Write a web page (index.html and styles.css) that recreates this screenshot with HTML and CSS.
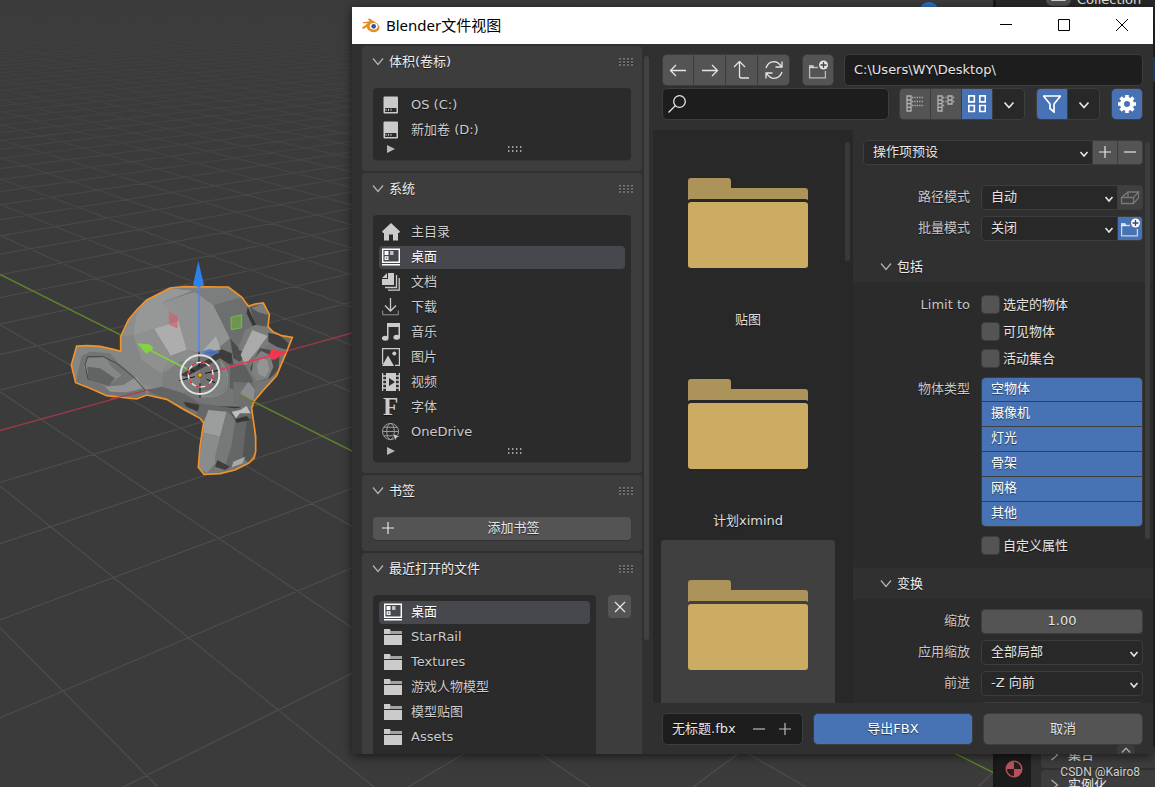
FILE: index.html
```html
<!DOCTYPE html>
<html lang="zh-CN">
<head>
<meta charset="utf-8">
<title>Blender文件视图</title>
<link rel="stylesheet" href="styles.css">
</head>
<body>
<svg class="symbols" aria-hidden="true">
  <symbol id="chev" viewBox="0 0 12 12"><path d="M1 2.500l5 6 5-6" fill="none" stroke="currentColor" stroke-width="1.200"/></symbol>
  <symbol id="arrow" viewBox="0 0 10 10"><path d="M1.500 3L5 7l3.500-4" fill="none" stroke="currentColor" stroke-width="1.600"/></symbol>
  <symbol id="grip" viewBox="0 0 16 8"><path d="M1 2h14M1 5h14M1 8h14" stroke="#181818" stroke-width="1.200" stroke-dasharray="2 2"/><path d="M1 1h14M1 4h14M1 7h14" stroke="#a8a8a8" stroke-width="1.200" stroke-dasharray="2 2"/></symbol>
  <symbol id="dots" viewBox="0 0 14 6"><path d="M0 1h14M0 5h14" stroke="#c9c9c9" stroke-width="1.400" stroke-dasharray="1.400 2.600"/></symbol>
  <symbol id="disk" viewBox="0 0 18 18"><path d="M3 .5h12q1 0 1 1v15q0 1-1 1H2.500q-1 0-1-1v-15q0-1 1.500-1z" fill="currentColor"/><path d="M3 12h11.500v4H3z" fill="#2b2b2b"/><path d="M4 12.800v2M6.500 12.800v2M9 12.800v2" stroke="currentColor"/></symbol>
  <symbol id="home" viewBox="0 0 18 18"><path d="M9 0l9 8.500-1 1.500h-1v7.500h-5v-6H7v6H2V10H1L0 8.500z" fill="currentColor"/></symbol>
  <symbol id="desktop" viewBox="0 0 18 18"><path d="M.7 1.200h16.600v13.100H.7zM0 16.700h18" fill="none" stroke="currentColor" stroke-width="1.400"/><path d="M2.500 3h4v4h-4z" fill="currentColor"/><path d="M8 3h3.500v4H8z" fill="currentColor" opacity=".65"/><path d="M3.200 8.900h2.700v2.500H3.200z" fill="none" stroke="currentColor" stroke-width="1.200"/></symbol>
  <symbol id="docs" viewBox="0 0 18 18"><path d="M6 0h6v12H0V6h6zM5 0v5H0z" fill="currentColor"/><path d="M14.500 2v12.500H3M17.200 5v12.200H6" fill="none" stroke="currentColor" stroke-width="1.300"/></symbol>
  <symbol id="down" viewBox="0 0 18 18"><path d="M8.500 0v13M3 7.500L8.500 13 14 7.500" fill="none" stroke="currentColor" stroke-width="1.300"/><path d="M.7 12.500v4.300h15.600v-4.300" fill="none" stroke="currentColor" opacity=".65"/></symbol>
  <symbol id="music" viewBox="0 0 18 18"><path d="M5 0h13v14h-1.500V4h-10v11H5z" fill="currentColor"/><ellipse cx="3.200" cy="15.300" rx="3.300" ry="2.500" fill="currentColor"/><ellipse cx="14.700" cy="14.300" rx="3.300" ry="2.500" fill="currentColor"/></symbol>
  <symbol id="image" viewBox="0 0 18 18"><path d="M.6 16V.6h16.800v16.800H13" fill="none" stroke="currentColor" stroke-width="1.200"/><path d="M0 18L6 7.500 12 18z" fill="currentColor"/><circle cx="12.300" cy="5.600" r="2" fill="currentColor"/></symbol>
  <symbol id="film" viewBox="0 0 18 18"><path d="M4 0h10v18H4z" fill="currentColor"/><path d="M7 5l6 4-6 4z" fill="#2b2b2b"/><path d="M.6 0v18M17.400 0v18M0 3h4M0 7h4M0 11h4M0 15h4M14 3h4M14 7h4M14 11h4M14 15h4" stroke="currentColor" stroke-width="1.300"/></symbol>
  <symbol id="globe" viewBox="0 0 19 19"><g fill="none" stroke="currentColor" opacity=".75"><circle cx="9" cy="9" r="8.500"/><ellipse cx="9" cy="9" rx="4" ry="8.500"/><path d="M.5 9h17M2 4.500h14M2 13.500h12"/></g><path d="M11 11l8 3-3.500 1.500L14 19z" fill="currentColor" stroke="#2b2b2b" stroke-width=".8"/></symbol>
  <symbol id="folder" viewBox="0 0 18 18"><path d="M0 1h6l1 2h11v3H0z" fill="currentColor" opacity=".75"/><path d="M0 1h6v5H0zM0 7h18v10H0z" fill="currentColor"/></symbol>
  <symbol id="plus" viewBox="0 0 12 12"><path d="M6 0v12M0 6h12" stroke="currentColor" stroke-width="1.200"/></symbol>
  <symbol id="minus" viewBox="0 0 12 12"><path d="M0 6h12" stroke="currentColor" stroke-width="1.200"/></symbol>
  <symbol id="bigfolder" viewBox="0 0 120 90"><path d="M0 22V3q0-3 3-3h37q3 0 3 3v7h74q3 0 3 3v9l-2-1H2z" fill="#ab9359"/><rect y="24" width="120" height="66" rx="3" fill="#ccab62"/></symbol>
  <symbol id="newfolder" viewBox="0 0 20 20"><path d="M1 5h4l1 1v2H1z" fill="currentColor" opacity=".7"/><path d="M10 7.500H1.600v10.400h15.800V11" fill="none" stroke="currentColor" stroke-width="1.300" opacity=".7"/><circle cx="15.500" cy="5" r="4.500" fill="currentColor"/><path d="M15.500 2v6M12.500 5h6" stroke="#404854" stroke-width="1.300"/></symbol>
</svg>

<main class="desktop">
  <svg class="viewport" viewBox="0 0 1155 787" preserveAspectRatio="xMinYMin slice" role="img" aria-label="3D 视图">
    <defs>
      <linearGradient id="fade" x1="0" y1="0" x2="0" y2="1"><stop offset="0" stop-color="#fff" stop-opacity=".04"/><stop offset=".13" stop-color="#fff" stop-opacity=".35"/><stop offset=".3" stop-color="#fff" stop-opacity=".75"/><stop offset=".5" stop-color="#fff"/></linearGradient>
      <mask id="far" maskUnits="userSpaceOnUse" x="0" y="0" width="1155" height="787"><rect width="1155" height="787" fill="url(#fade)"/></mask>
      <path id="head" d="M230 348L262 347 300 349 340 358 362 364 362 320 385 270 410 240 440 210 475 192 510 174 555 170 685 171 725 201 745 229 765 222 790 219 808 254 804 290 820 306 845 317 877 322 858 370 840 412 830 437 795 475 762 514 755 535 760 570 767 620 767 665 762 685 745 700 705 720 660 731 612 733 595 712 600 650 611 578 600 565 550 538 500 508 440 495 410 507 320 497 270 475 227 458 214 405Z"/>
      <clipPath id="head-clip"><use href="#head"/></clipPath>
    </defs>
    <rect width="1155" height="787" fill="#3b3b3b"/>
    <g mask="url(#far)"><path id="grid" fill="none" stroke="#4d4d4d" stroke-width="1.200"/></g>
    <path d="M0 274.500L1022 787" stroke="#5d8428" stroke-width="1.400"/>
    <path d="M0 430.500L352 333" stroke="#963a48" stroke-width="1.300"/>
    <g transform="translate(0 230) scale(.33333)">
      <use href="#head" class="head-fill"/>
      <g clip-path="url(#head-clip)">
      <path fill="#8c8d8d" d="M410 240L440 210 487 217 462 296 500 370 530 390 490 430 485 470 440 490 385 420 362 364 362 320 385 270Z"/>
      <path fill="#969797" d="M440 210L510 174 580 182 487 217 515 245 535 272 462 296 400 320 410 250Z"/>
      <path fill="#919292" d="M487 217L600 180 640 225 690 325 660 350 600 370 560 360 530 270Z"/>
      <path fill="#808181" d="M510 174L685 171 725 201 745 229 740 290 690 325 640 225 580 182Z"/>
      <path fill="#6d6e6e" d="M640 225L725 201 745 229 765 290 700 360 690 325Z"/>
      <path fill="#7c7d7d" d="M640 225L580 182 685 171 725 201Z"/>
      <path fill="#acadac" d="M462 296L535 272 560 360 512 378Z"/>
      <path fill="#858686" d="M362 320L400 315 425 360 500 400 490 480 420 460 362 364Z"/>
      <path fill="#8f9090" d="M400 315L462 296 512 378 485 430 425 390Z"/>
      <path fill="#8b8c8c" d="M512 378L560 360 600 372 600 395 540 395 490 430Z"/>
      <path fill="#7d7e7e" d="M490 430L540 395 600 390 600 470 550 490 485 470Z"/>
      <path fill="#636464" d="M485 470L550 490 600 520 570 540 500 508 435 480Z"/>
      <path fill="#3b3a38" d="M550 515L620 528 725 530 700 540 630 540 615 555 560 530Z"/>
      <path fill="#707171" d="M600 370L660 350 700 390 690 470 640 500 600 490Z"/>
      <path fill="#aaabab" d="M648 318L662 358 600 372Z"/>
      <path fill="#3e3d3c" d="M540 435L620 390 665 358 695 370 700 410 660 385 560 440Z"/>
      <path fill="#7f8080" d="M660 385Q695 430 675 475Q655 505 600 500L590 485 650 475 665 430Z"/>
      <path fill="none" stroke="#9b9c9c" stroke-width="2" d="M660 395Q695 430 679 475Q665 505 604 500"/>
      <path fill="#5d5e5e" d="M690 400L735 405 760 455 730 490 690 475Z"/>
      <path fill="#4c4c4c" d="M690 325L735 375 720 395 700 385Z"/>
      <path fill="#555656" d="M750 232L790 219 808 254 803 290 765 285Z"/>
      <path fill="#7b7c7c" d="M755 234L790 220 804 255 775 247Z"/>
      <path fill="#373635" d="M743 230L768 285 758 288 740 250Z"/>
      <path fill="#7a7b7b" d="M735 300L765 285 803 290 820 310 805 345 765 370 715 360Z"/>
      <path fill="#aaaba9" d="M757 300L803 318 765 370 735 405 722 374Z"/>
      <path fill="#3f3e3e" d="M805 308L877 325 862 360 830 350 805 335Z"/>
      <path fill="#666767" d="M840 317L877 322 868 342Z"/>
      <path fill="#4a4a4a" d="M780 355L840 365 835 420 810 445 770 455 750 415Z"/>
      <path fill="#7e7f7f" d="M783 362L810 375 820 410 805 445 770 455 755 430 760 390Z"/>
      <path fill="#939494" d="M783 385L802 390 808 420 795 442 775 432 770 405Z"/>
      <path fill="#6f7070" d="M700 455L765 460 770 510 745 535 700 520Z"/>
      <path fill="#8b8c8c" d="M745 455L765 480 760 515 720 490Z"/>
      <path fill="#666767" d="M600 520L700 535 755 535 760 575 700 565 611 578 590 555Z"/>
      <path fill="#9c9d9d" d="M625 540L680 545 660 620 610 608 611 578Z"/>
      <path fill="#8a8b8b" d="M610 608L660 620 645 700 620 730 595 712Z"/>
      <path fill="#777878" d="M680 545L707 565 695 645 675 710 645 730 645 680Z"/>
      <path fill="#656666" d="M707 565L755 560 740 670 705 710 675 710 695 645Z"/>
      <path fill="#535454" d="M740 570L760 565 767 665 745 700 728 680Z"/>
      <path fill="#bdbebe" d="M695 545L720 540 740 528 752 550 720 550 708 565Z"/>
      <path fill="#373635" d="M685 535L706 568 740 558 750 570 710 578Z"/>
      <path fill="#a8a9a9" d="M700 695L735 680 728 700 695 712Z"/>
      <path fill="#3e3e3d" d="M652 690L690 710 675 720 645 710Z"/>
      <path fill="#858686" d="M230 348L300 349 362 364 420 460 380 430 330 370 270 365 245 390 235 435 227 458 214 405Z"/>
      <path fill="#737474" d="M245 378L270 365 330 380 375 415 430 470 410 507 320 497 227 458Z"/>
      <path fill="#858686" d="M262 385L315 380 335 410 365 435 320 470 270 450 250 410Z"/>
      <path fill="#626363" d="M262 410L300 415 345 445 325 468 266 450Z"/>
      <path fill="#939494" d="M315 470L370 465 410 440 430 475 380 487 330 485Z"/>
      <path fill="none" stroke="#444" stroke-width="3" d="M265 450L255 405 263 380 310 380 350 400 400 440 435 480"/>
      </g>
      <use href="#head" class="head-outline"/>
      <path d="M330 508L440 481" stroke="#a83e50" stroke-width="4"/>
      <path d="M720 495L762 516" stroke="#5d8428" stroke-width="4"/>
      <path d="M597 170V365" stroke="#5684e8" stroke-width="5"/><path d="M595 93L579 165Q595 176 612 165Z" fill="#2b82ec"/>
      <path d="M453 362L560 416" stroke="#83cf3d" stroke-width="5"/><path d="M411 340L447 343Q462 350 458 359L438 371Z" fill="#82d33e"/>
      <path d="M658 420L815 376" stroke="#e83a58" stroke-width="5"/><path d="M863 365L815 359Q805 367 813 388L823 389Z" fill="#f53550"/>
      <path d="M508 246L531 261V293L508 283Z" fill="#d7525f" fill-opacity=".55" stroke="#ed5968" stroke-width="2"/>
      <path d="M693 262L725 254V293L694 299Z" fill="#6ca542" fill-opacity=".7" stroke="#76bd45" stroke-width="3"/>
      <path d="M602 366L630 358 657 367 633 376Z" fill="#456ac1" fill-opacity=".8" stroke="#5585e6" stroke-width="2"/>
      <path d="M597 365V410M600 460V503M538 452L585 440M615 430L660 420M565 415L585 425M620 448L645 458" stroke="#111" stroke-width="3"/>
      <circle cx="600" cy="434" r="58" fill="none" stroke="#e2e2e2" stroke-width="6"/>
      <circle cx="602" cy="434" r="37" fill="none" stroke="#f2f2f2" stroke-width="4"/><circle cx="602" cy="434" r="37" fill="none" stroke="#e02530" stroke-width="4" stroke-dasharray="14.500 14.500"/>
      <circle cx="600" cy="435" r="7" fill="#ffa028" stroke="#603b10" stroke-width="2"/>
    </g>
    <circle cx="929" cy="12" r="10" fill="#2c6fc4"/>
  </svg>

  <aside class="dock">
    <div class="outliner"><span class="outliner-icon"></span><span class="outliner-name">Collection</span></div>
    <div class="dock-bottom">
      <div class="tabs"><svg class="material" viewBox="0 0 18 18"><circle cx="9" cy="9" r="8.500" fill="#b5525c"/><path d="M9 2v7h7A7 7 0 0 0 9 2zM9 9v7A7 7 0 0 1 2 9z" fill="#251c1d"/></svg></div>
      <div class="props"><div class="prop"><svg class="chev turned"><use href="#chev"/></svg>集合</div><div class="prop"><svg class="chev turned"><use href="#chev"/></svg>实例化</div></div>
    </div>
    <div class="edge"></div>
  </aside>

  <section class="window">
    <header class="titlebar">
      <svg class="logo" viewBox="0 0 54 46"><path d="M2 15L24 12 19 8Q17 3 24 4L47 19Q58 32 47 41Q33 50 20 39Q15 34 14 28L7 34Q2 36 0 31L17 18H3Z" fill="#e98a22"/><ellipse cx="35" cy="27" rx="12" ry="10" fill="#fff"/><circle cx="35" cy="27" r="7" fill="#285a96"/></svg>
      <h1 class="title">Blender文件视图</h1>
      <button class="wbtn" aria-label="最小化"><svg viewBox="0 0 12 12"><path d="M0 5.500h12" stroke="#000"/></svg></button>
      <button class="wbtn" aria-label="最大化"><svg viewBox="0 0 12 12"><path d="M.5.500h11v11H.5z" fill="none" stroke="#000"/></svg></button>
      <button class="wbtn" aria-label="关闭"><svg viewBox="0 0 12 12"><path d="M0 0l12 12M12 0L0 12" stroke="#000"/></svg></button>
    </header>

    <div class="body">
      <nav class="side">
        <div class="panels">
          <section class="panel">
            <h2 class="phead"><svg class="chev"><use href="#chev"/></svg>体积(卷标)<svg class="grip"><use href="#grip"/></svg></h2>
            <div class="list">
              <button class="item"><svg class="ico"><use href="#disk"/></svg>OS (C:)</button>
              <button class="item"><svg class="ico"><use href="#disk"/></svg>新加卷 (D:)</button>
              <div class="lfoot"><span class="tri"></span><svg class="dots"><use href="#dots"/></svg></div>
            </div>
          </section>
          <section class="panel">
            <h2 class="phead"><svg class="chev"><use href="#chev"/></svg>系统<svg class="grip"><use href="#grip"/></svg></h2>
            <div class="list">
              <button class="item"><svg class="ico"><use href="#home"/></svg>主目录</button>
              <button class="item on"><svg class="ico"><use href="#desktop"/></svg>桌面</button>
              <button class="item"><svg class="ico"><use href="#docs"/></svg>文档</button>
              <button class="item"><svg class="ico"><use href="#down"/></svg>下载</button>
              <button class="item"><svg class="ico"><use href="#music"/></svg>音乐</button>
              <button class="item"><svg class="ico"><use href="#image"/></svg>图片</button>
              <button class="item"><svg class="ico"><use href="#film"/></svg>视频</button>
              <button class="item"><svg class="ico spill" viewBox="0 0 18 18" aria-hidden="true"><text x="1" y="17" class="font-icon">F</text></svg>字体</button>
              <button class="item"><svg class="ico"><use href="#globe"/></svg>OneDrive</button>
              <div class="lfoot"><span class="tri"></span><svg class="dots"><use href="#dots"/></svg></div>
            </div>
          </section>
          <section class="panel">
            <h2 class="phead"><svg class="chev"><use href="#chev"/></svg>书签<svg class="grip"><use href="#grip"/></svg></h2>
            <button class="add"><svg class="s12"><use href="#plus"/></svg><span>添加书签</span></button>
          </section>
          <section class="panel last">
            <h2 class="phead"><svg class="chev"><use href="#chev"/></svg>最近打开的文件<svg class="grip"><use href="#grip"/></svg></h2>
            <div class="recent">
              <div class="list rlist">
                <button class="item on"><svg class="ico"><use href="#desktop"/></svg>桌面</button>
                <button class="item"><svg class="ico"><use href="#folder"/></svg>StarRail</button>
                <button class="item"><svg class="ico"><use href="#folder"/></svg>Textures</button>
                <button class="item"><svg class="ico"><use href="#folder"/></svg>游戏人物模型</button>
                <button class="item"><svg class="ico"><use href="#folder"/></svg>模型贴图</button>
                <button class="item"><svg class="ico"><use href="#folder"/></svg>Assets</button>
              </div>
              <button class="clear" aria-label="清除"><svg viewBox="0 0 12 12"><path d="M1 1l10 10M11 1L1 11" stroke="currentColor" stroke-width="1.300"/></svg></button>
            </div>
          </section>
        </div>
        <div class="scroll side-scroll"></div>
      </nav>

      <div class="browser">
        <div class="tools">
          <div class="trow">
            <div class="group">
              <button class="tb" aria-label="后退"><svg viewBox="0 0 18 18"><path d="M17 9.500H1.500M7 4L1.500 9.500 7 15" class="line"/></svg></button>
              <button class="tb" aria-label="前进"><svg viewBox="0 0 18 18"><path d="M1 9.500h15.500M11 4l5.500 5.500L11 15" class="line"/></svg></button>
              <button class="tb" aria-label="上级"><svg viewBox="0 0 18 18"><path d="M1 6L6.500.500 12 6M6.500.500V15q0 2 2 2H16" class="line"/></svg></button>
              <button class="tb" aria-label="刷新"><svg viewBox="0 0 18 18"><path d="M1 7Q3 1 9 .7q4 0 7.500 5M17 .500V6h-6.500M17 11q-2 6-8 6.300-4 0-7.500-5M1 17.500V12h6.500" class="line"/></svg></button>
            </div>
            <button class="tb solo" aria-label="新建文件夹"><svg class="s20"><use href="#newfolder"/></svg></button>
            <input class="path" aria-label="路径" value="C:\Users\WY\Desktop\">
          </div>
          <div class="trow">
            <label class="search"><svg viewBox="0 0 18 18"><circle cx="11.500" cy="6.500" r="5.800" class="line"/><path d="M7.500 10.500L.5 17.500" class="line"/></svg><input aria-label="搜索"></label>
            <div class="group views">
              <button class="tb dim" aria-label="列表"><svg viewBox="0 0 18 18"><path d="M1 1h4v15H1zM1 5h4M1 8.700h4M1 12.300h4" class="line"/><path d="M6 2.500h12M6 6.500h12M6 10.500h12" class="line dash"/></svg></button>
              <button class="tb dim" aria-label="详情"><svg viewBox="0 0 18 18"><path d="M1 1h4v15H1zM1 5h4M1 8.700h4M1 12.300h4M11 1h4v8h-4zM11 5h4" class="line"/><path d="M6 2.500h4M6 6.500h4M6 10.500h2M16 2.500h2M16 6.500h2" class="line dash"/></svg></button>
              <button class="tb blue" aria-label="缩略图"><svg viewBox="0 0 18 18"><path d="M.8.800h5.500v6H.8zM11.800.800h5.500v6h-5.500zM.8 10.500h5.500v6H.8zM11.800 10.500h5.500v6h-5.500z" class="line thick"/></svg></button>
              <button class="tb dark" aria-label="显示设置"><svg viewBox="0 0 18 18"><path d="M4.500 7.500l4.500 5 4.500-5" class="line thick"/></svg></button>
            </div>
            <div class="group filter">
              <button class="tb blue" aria-label="过滤"><svg viewBox="0 0 18 18"><path d="M.5 1h17L11 9v8l-4-3.500V9z" class="line thick"/></svg></button>
              <button class="tb dark" aria-label="过滤设置"><svg viewBox="0 0 18 18"><path d="M4.500 7.500l4.500 5 4.500-5" class="line thick"/></svg></button>
            </div>
            <button class="tb blue solo" aria-label="选项"><svg viewBox="0 0 18 18"><circle cx="9" cy="9" r="5" fill="none" stroke="currentColor" stroke-width="4"/><path d="M9 0v4M9 14v4M0 9h4M14 9h4M2.600 2.600l3 3M12.400 12.400l3 3M2.600 15.400l3-3M12.400 5.600l3-3" stroke="currentColor" stroke-width="3.600"/></svg></button>
          </div>
        </div>

        <div class="content">
          <div class="files">
            <div class="grid">
              <figure class="tile"><svg class="big"><use href="#bigfolder"/></svg><figcaption>贴图</figcaption></figure>
              <figure class="tile"><svg class="big"><use href="#bigfolder"/></svg><figcaption>计划ximind</figcaption></figure>
              <figure class="tile sel"><svg class="big"><use href="#bigfolder"/></svg></figure>
            </div>
            <div class="scroll files-scroll"></div>
          </div>

          <form class="opts">
            <div class="row preset"><span class="sel-wrap"><select aria-label="预设"><option>操作项预设</option></select><svg class="arrow"><use href="#arrow"/></svg></span><button type="button" class="mini" aria-label="添加预设"><svg class="s12"><use href="#plus"/></svg></button><button type="button" class="mini end" aria-label="移除预设"><svg class="s12"><use href="#minus"/></svg></button></div>
            <div class="rows modes">
              <div class="row"><label for="pm">路径模式</label><span class="sel-wrap"><select id="pm"><option>自动</option></select><svg class="arrow"><use href="#arrow"/></svg></span><button type="button" class="mini off end" aria-label="内嵌纹理"><svg class="s20" viewBox="0 0 20 20"><path d="M1.500 10.500h12v6h-12zM1.500 10.500L8 5h10.500l-5 5.500M18.500 5v6l-5 5.500M8 5v5" class="line"/></svg></button></div>
              <div class="row"><label for="bm">批量模式</label><span class="sel-wrap"><select id="bm"><option>关闭</option></select><svg class="arrow"><use href="#arrow"/></svg></span><button type="button" class="mini blue end" aria-label="批处理自有目录"><svg class="s20"><use href="#newfolder"/></svg></button></div>
            </div>
            <h3 class="sub"><svg class="chev"><use href="#chev"/></svg>包括</h3>
            <div class="inner">
              <div class="crow"><span class="lab">Limit to</span><label class="check"><input type="checkbox">选定的物体</label></div>
              <div class="crow"><span class="lab"></span><label class="check"><input type="checkbox">可见物体</label></div>
              <div class="crow"><span class="lab"></span><label class="check"><input type="checkbox">活动集合</label></div>
              <div class="types"><span class="lab">物体类型</span><div class="tlist"><button type="button">空物体</button><button type="button">摄像机</button><button type="button">灯光</button><button type="button">骨架</button><button type="button">网格</button><button type="button">其他</button></div></div>
              <div class="crow"><span class="lab"></span><label class="check"><input type="checkbox">自定义属性</label></div>
            </div>
            <h3 class="sub"><svg class="chev"><use href="#chev"/></svg>变换</h3>
            <div class="inner rows trans">
              <div class="row"><label for="sc">缩放</label><input id="sc" class="num" value="1.00"></div>
              <div class="row"><label for="as">应用缩放</label><span class="sel-wrap round"><select id="as"><option>全部局部</option></select><svg class="arrow"><use href="#arrow"/></svg></span></div>
              <div class="row"><label for="fw">前进</label><span class="sel-wrap round"><select id="fw"><option>-Z 向前</option></select><svg class="arrow"><use href="#arrow"/></svg></span></div>
              <div class="row"><span class="lab"></span><span class="sel-wrap round"><select aria-label="向上"><option></option></select></span></div>
            </div>
            <div class="scroll opts-scroll"></div>
          </form>
        </div>

        <footer class="foot">
          <div class="fname"><input aria-label="文件名" value="无标题.fbx"><button aria-label="减"><svg class="s12"><use href="#minus"/></svg></button><button aria-label="加"><svg class="s12"><use href="#plus"/></svg></button></div>
          <button class="act blue">导出FBX</button>
          <button class="act">取消</button>
          <span class="tab"><svg viewBox="0 0 12 12"><path d="M1 9l5-5 5 5" class="line thick"/></svg></span>
        </footer>
      </div>
    </div>
  </section>
  <p class="credit">CSDN @Kairo8</p>
</main>
<script src="grid.js"></script>
</body>
</html>
```
FILE: grid.js
```js
// Ground-plane grid: two families of lines, each meeting at its vanishing point.
const HORIZON = -75;
const BASE = 787;
let d = "";
for (let k = -70; k < 10; k++) {
  if (k !== 0) d += `M${1022 - 216 * k} ${BASE}L-697 ${HORIZON}`;
}
for (let k = -5; k < 75; k++) {
  if (k !== 7) d += `M${693 - 285 * k} ${BASE}L1860 ${HORIZON}`;
}
document.getElementById("grid").setAttribute("d", d);
```
FILE: styles.css
```css
* { box-sizing: border-box; }
body { margin: 0; background: #3b3b3b; color: #e5e5e5; font: 13px/16px "DejaVu Sans", "Noto Sans CJK SC", sans-serif; }
button, input, select { font: inherit; color: inherit; margin: 0; padding: 0; border: 0; background: none; min-width: 0; text-shadow: inherit; }
svg { display: block; flex: none; }
h1, h2, h3, p, figure { margin: 0; font-weight: 400; }
.symbols { position: absolute; width: 0; height: 0; }
.desktop { position: relative; height: 100vh; overflow: hidden; }
.viewport { position: absolute; inset: 0; width: 100%; height: 100%; }
.head-fill { fill: #747575; }
.head-outline { fill: none; stroke: #f0932b; stroke-width: 5; }
.font-icon { font: bold 25px "Liberation Serif", serif; fill: currentColor; }
.line { fill: none; stroke: currentColor; stroke-width: 1.3; }
.thick { stroke-width: 1.7; }
.dash { stroke-dasharray: 1.2 1.2; }

.dock { position: absolute; top: 0; right: 0; bottom: 0; width: 162px; display: flex; flex-direction: column; justify-content: space-between; background: #282828; border-left: 3px solid #191919; }
.outliner { display: flex; gap: 6px; height: 6px; padding-left: 50px; align-items: flex-end; }
.outliner-name { height: 14px; line-height: 16px; }
.outliner-icon { flex: none; width: 25px; height: 20px; border: 5px solid #505050; border-radius: 6px; background: #cfcfcf; }
.dock-bottom { display: flex; height: 40px; overflow: hidden; background: #303030; }
.tabs { width: 35px; background: #1b1b1b; padding: 13px 9px; }
.material { width: 18px; height: 18px; }
.props { flex: 1; margin-left: 10px; display: flex; flex-direction: column; gap: 2px; }
.prop { display: flex; flex: none; align-items: center; gap: 2px; height: 30px; padding-left: 9px; background: #3d3d3d; border-radius: 4px 0 0 4px; }
.prop:first-child { height: 21px; padding-bottom: 6px; }
.turned { transform: rotate(-90deg); }
.edge { position: absolute; right: 0; top: 57px; width: 2px; height: 25px; background: #2b4b83; }
.credit { position: absolute; right: 15px; bottom: 7px; color: #d0d0d0; font: 12px/16px Roboto, sans-serif; text-shadow: 0 1px 1px #222; }

.window { position: absolute; left: 352px; right: 2px; top: 7px; bottom: 33px; display: flex; flex-direction: column; background: #303030; box-shadow: 0 2px 10px #0009; text-shadow: 0 1px 1px #0008; }
.titlebar { display: flex; align-items: center; flex: none; height: 37px; padding: 0 2px 1px 10px; background: #fff; color: #000; text-shadow: none; }
.logo { width: 18px; height: 16px; }
.title { flex: 1; margin-left: 6px; font: 15px/20px "Noto Sans", "Noto Sans CJK SC", sans-serif; }
.wbtn { display: flex; justify-content: center; width: 58px; }
.wbtn svg { width: 12px; height: 12px; }
.body { display: flex; flex: 1; min-height: 0; }

.side { display: flex; flex: none; width: 300px; gap: 2px; padding: 2px 0 0 10px; }
.panels { display: flex; flex-direction: column; gap: 2px; width: 280px; overflow: hidden; }
.panel { flex: none; padding: 0 11px 11px; background: #3d3d3d; border-radius: 4px; }
.phead { display: flex; align-items: center; height: 32px; margin-bottom: 10px; font-size: 13px; color: #eee; }
.chev { width: 12px; height: 12px; margin: 0 5px 0 -1px; color: #b5b5b5; }
.grip { width: 16px; height: 8px; margin: 0 -3px 0 auto; }
.list { padding: 6px 6px 0; background: #2b2b2b; border-radius: 4px; box-shadow: 0 1px #353535; display: flex; flex-direction: column; }
.item { display: flex; align-items: center; height: 23px; margin-bottom: 2px; padding: 0 0 1px 3px; gap: 11px; border-radius: 4px; color: #cbcbcb; text-align: left; }
.item.on { background: #47484e; color: #fff; }
.ico { width: 18px; height: 18px; }
.spill { overflow: visible; }
.lfoot { display: flex; align-items: center; height: 16px; padding: 0 0 6px 8px; }
.tri { border: solid transparent; border-width: 4px 0 4px 8px; border-left-color: #b9b9b9; }
.dots { width: 14px; height: 6px; margin-left: 113px; }
.add { display: flex; align-items: center; width: 100%; height: 23px; padding: 0 0 1px 9px; background: #545454; border-radius: 4px; box-shadow: 0 1px #333; }
.add span { flex: 1; padding-left: 2px; }
.s12 { width: 12px; height: 12px; }
.s20 { width: 20px; height: 20px; }
.recent { display: flex; align-items: flex-start; gap: 12px; }
.rlist { flex: 1; padding-bottom: 30px; }
.rlist .item { padding-left: 5px; gap: 9px; }
.clear { display: flex; align-items: center; justify-content: center; width: 23px; height: 23px; background: #545454; border-radius: 4px; }
.clear svg { width: 12px; height: 12px; }
.scroll { width: 5px; border-radius: 3px; background: #424242; }
.side-scroll { flex: none; height: 584px; margin-top: 10px; }

.browser { flex: 1; min-width: 0; display: flex; flex-direction: column; }
.tools { flex: none; display: flex; flex-direction: column; gap: 2px; padding: 10px; }
.trow { display: flex; height: 32px; }
.group { display: flex; gap: 1px; padding: 1px; background: #3d3d3d; border-radius: 5px; overflow: hidden; }
.tb { display: flex; align-items: center; justify-content: center; width: 31px; background: #545454; }
.tb svg { width: 18px; height: 18px; }
.tb .s20 { width: 20px; height: 20px; }
.views .tb { width: 30px; }
.group .tb:first-child { border-radius: 4px 0 0 4px; width: 30px; }
.group .tb:last-child { border-radius: 0 4px 4px 0; width: 31px; }
.solo { width: 32px; border: 1px solid #3d3d3d; border-radius: 5px; }
.trow:first-child .solo { margin: 0 10px 0 12px; }
.blue, .tb.blue { background: #4772b3; color: #fff; }
.tb.dark { background: #282828; }
.dim { color: #b3b3b3; }
.path { flex: 1; padding: 0 9px 1px; background: #1d1d1d; border: 1px solid #3d3d3d; border-radius: 5px; }
.search { display: flex; align-items: center; flex: 1; margin-right: 10px; padding-left: 5px; background: #1d1d1d; border: 1px solid #3d3d3d; border-radius: 5px; }
.search svg { width: 18px; height: 18px; }
.search input { flex: 1; padding: 0 6px; }
.filter { margin: 0 11px; }
input:focus, select:focus { outline: 1px solid #4772b3; }

.content { display: flex; flex: 1; min-height: 0; }
.files { display: flex; flex: 1; background: #282828; overflow: hidden; border-left: 1px solid #303030; }
.grid { flex: 1; padding: 8px 10px 0 8px; }
.tile { display: flex; flex-direction: column; align-items: center; height: 201px; padding-top: 40px; border-radius: 4px; }
.tile.sel { background: #404040; }
.big { width: 120px; height: 90px; }
.tile figcaption { margin-top: 44px; color: #ddd; }
.files-scroll { flex: none; height: 119px; margin: 12px 3px 0 0; background: #393939; }

.opts { position: relative; width: 300px; flex: none; overflow: hidden; padding-top: 10px; }
.row { display: flex; height: 25px; align-items: stretch; padding-right: 10px; }
.preset { padding-left: 10px; }
.row > label, .lab { width: 117px; flex: none; margin-right: 11px; line-height: 24px; text-align: right; color: #c7c7c7; }
.sel-wrap { position: relative; flex: 1; display: flex; background: #282828; border: 1px solid #3d3d3d; border-radius: 4px 0 0 4px; }
.sel-wrap.round { border-radius: 4px; }
select { appearance: none; width: 100%; padding: 0 20px 1px 9px; }
.arrow { position: absolute; right: 3px; top: 8px; width: 10px; height: 10px; pointer-events: none; }
.mini { display: flex; align-items: center; justify-content: center; width: 25px; padding-bottom: 1px; background: #545454; border: 1px solid #3d3d3d; border-left: 0; }
.mini.end { border-radius: 0 4px 4px 0; }
.mini.blue { background: #4772b3; }
.mini.off { background: #404040; color: #777; }
.rows { display: flex; flex-direction: column; gap: 6px; }
.modes { margin-top: 20px; }
.sub { display: flex; align-items: center; height: 31px; padding-left: 28px; font-size: 13px; color: #eee; }
.modes + .sub { margin-top: 10px; }
.inner { padding: 9px 0; background: #2b2b2b; border-radius: 4px; }
.inner.trans { padding: 10px 0; }
.crow { display: flex; align-items: center; height: 27px; }
.types + .crow { margin-top: 5px; }
.check { display: flex; align-items: center; gap: 3px; height: 23px; }
.check input { appearance: none; width: 19px; height: 19px; background: #545454; border: 1px solid #3d3d3d; border-radius: 4px; }
.check input:checked { background: #4772b3; }
.types { display: flex; margin-top: 5px; padding-right: 10px; }
.tlist { flex: 1; display: flex; flex-direction: column; gap: 1px; padding: 1px; background: #3d3d3d; border-radius: 5px; overflow: hidden; }
.tlist button { height: 24px; padding: 0 0 2px 9px; background: #4772b3; text-align: left; color: #fff; }
.tlist button:first-child { height: 23px; border-radius: 4px 4px 0 0; }
.tlist button:last-child { border-radius: 0 0 4px 4px; }
.num { flex: 1; text-align: center; background: #545454; border: 1px solid #3d3d3d; border-radius: 4px; padding-bottom: 1px; }
.opts-scroll { position: absolute; right: 3px; top: 12px; height: 397px; background: #3d3d3d; }

.foot { position: relative; flex: none; display: flex; gap: 10px; height: 51px; padding: 10px 10px 9px; }
.fname, .act { border: 1px solid #3d3d3d; border-radius: 5px; }
.fname { display: flex; width: 141px; background: #1d1d1d; padding: 0 4px 0 9px; }
.fname input { flex: 1; }
.fname button { display: flex; align-items: center; justify-content: center; width: 26px; color: #bbb; }
.act { flex: 1; background: #545454; }
.act.blue { background: #4772b3; }
.tab { position: absolute; right: 18px; bottom: 0; width: 18px; height: 9px; display: flex; justify-content: center; background: #3a3a3a; border-radius: 4px 4px 0 0; color: #aaa; }
.tab svg { width: 10px; height: 10px; }
```
